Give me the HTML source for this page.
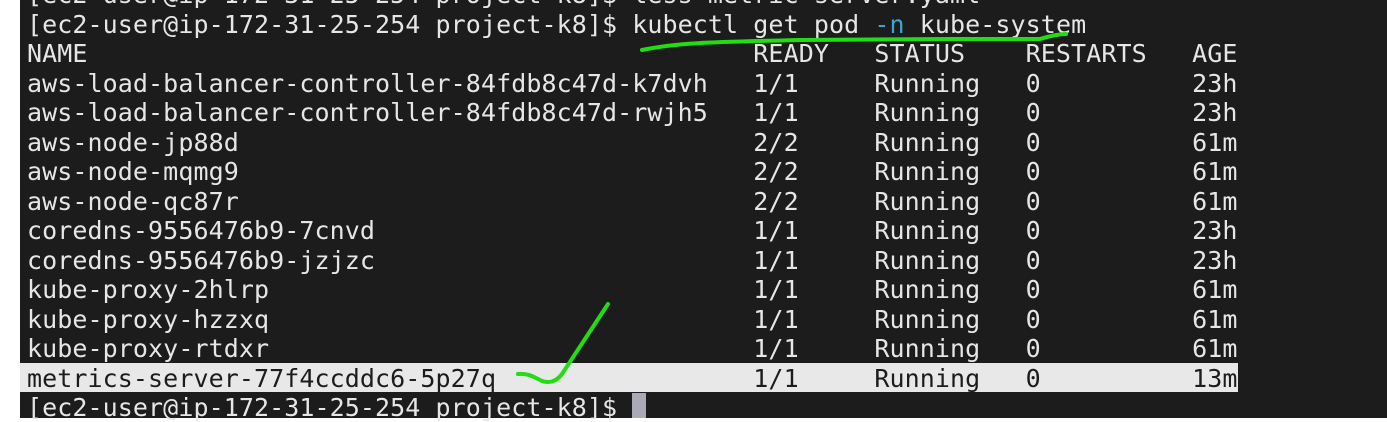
<!DOCTYPE html>
<html><head><style>
body{margin:0;width:1387px;height:418px;overflow:hidden;background:#fff;position:relative}
#t{position:absolute;left:20px;top:0;width:1367px;height:418px;background:#1c1c1c}
.l{position:absolute;left:27px;font-family:"DejaVu Sans Mono","Liberation Mono",monospace;font-size:25px;line-height:29px;color:#e6e6e6;white-space:pre;letter-spacing:0.08px}
.c{color:#3aa6d0}
#hl{position:absolute;left:20px;top:363px;width:1218px;height:29px;background:#e8e8e8}
#cur{position:absolute;left:632px;top:393px;width:14px;height:25px;background:#a9a9b8}
</style></head><body>
<div id="t"></div>
<div id="hl"></div>
<div id="cur"></div>
<div class="l" style="top:-20px">[ec2-user@ip-172-31-25-254 project-k8]$ less metric-server.yaml</div>
<div class="l" style="top:10px">[ec2-user@ip-172-31-25-254 project-k8]$ kubectl get pod <span class="c">-n</span> kube-system</div>
<div class="l" style="top:39px">NAME                                            READY   STATUS    RESTARTS   AGE</div>
<div class="l" style="top:69px">aws-load-balancer-controller-84fdb8c47d-k7dvh   1/1     Running   0          23h</div>
<div class="l" style="top:98px">aws-load-balancer-controller-84fdb8c47d-rwjh5   1/1     Running   0          23h</div>
<div class="l" style="top:128px">aws-node-jp88d                                  2/2     Running   0          61m</div>
<div class="l" style="top:157px">aws-node-mqmg9                                  2/2     Running   0          61m</div>
<div class="l" style="top:187px">aws-node-qc87r                                  2/2     Running   0          61m</div>
<div class="l" style="top:216px">coredns-9556476b9-7cnvd                         1/1     Running   0          23h</div>
<div class="l" style="top:246px">coredns-9556476b9-jzjzc                         1/1     Running   0          23h</div>
<div class="l" style="top:275px">kube-proxy-2hlrp                                1/1     Running   0          61m</div>
<div class="l" style="top:305px">kube-proxy-hzzxq                                1/1     Running   0          61m</div>
<div class="l" style="top:334px">kube-proxy-rtdxr                                1/1     Running   0          61m</div>
<div class="l" style="top:364px;color:#1c1c1c">metrics-server-77f4ccddc6-5p27q                 1/1     Running   0          13m</div>
<div class="l" style="top:393px">[ec2-user@ip-172-31-25-254 project-k8]$ </div>
<svg width="1387" height="418" style="position:absolute;left:0;top:0" fill="none" stroke="#22dd11" stroke-width="4" stroke-linecap="round">
<path d="M642 50 C680 42 720 42 800 40 L950 39 L1040 39 C1050 36 1058 34 1066 34"/>
<path d="M518 374 C528 373 534 377 540 380 C548 384 556 382 562 374 L608 304"/>
</svg>
</body></html>
